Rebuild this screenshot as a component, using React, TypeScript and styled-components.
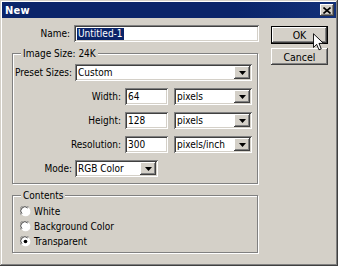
import React from 'react';
import styled, { createGlobalStyle } from 'styled-components';

const GlobalStyle = createGlobalStyle`
  html, body {
    margin: 0;
    padding: 0;
    background: #d4d0c8;
  }
  body {
    font-family: "DejaVu Sans Condensed", "DejaVu Sans", sans-serif;
    font-stretch: condensed;
    font-size: 10px;
    color: #000;
  }
`;

const raised = `
  box-shadow: inset -1px -1px #404040, inset 1px 1px #ffffff,
    inset -2px -2px #808080, inset 2px 2px #d4d0c8;
`;

const sunken = `
  box-shadow: inset 1px 1px #808080, inset -1px -1px #ffffff,
    inset 2px 2px #404040, inset -2px -2px #d4d0c8;
`;

const Window = styled.div`
  position: relative;
  width: 338px;
  height: 266px;
  box-sizing: border-box;
  padding: 2px;
  background: #d4d0c8;
  box-shadow: inset -1px -1px #404040, inset 1px 1px #d4d0c8,
    inset -2px -2px #808080, inset 2px 2px #ffffff;
  display: flex;
  flex-direction: column;
`;

const TitleBar = styled.div`
  height: 16px;
  background: linear-gradient(to right, #0a246a 0%, #0a246a 70%, #123078 100%);
  display: flex;
  align-items: center;
  justify-content: space-between;
  padding: 0 2px 0 3px;
`;

const Title = styled.span`
  color: #fff;
  font-weight: bold;
  font-size: 11px;
  letter-spacing: 0.2px;
`;

const CloseButton = styled.div`
  width: 14px;
  height: 12px;
  background: #d4d0c8;
  ${raised}
  display: flex;
  align-items: center;
  justify-content: center;
`;

const Body = styled.div`
  display: flex;
  padding: 7px 0 0 10px;
  gap: 12px;
`;

const LeftColumn = styled.div`
  width: 247px;
  display: flex;
  flex-direction: column;
`;

const RightColumn = styled.div`
  width: 57px;
  display: flex;
  flex-direction: column;
  padding-top: 1px;
  gap: 4px;
`;

const Row = styled.div<{ $gap?: number }>`
  height: 17px;
  display: flex;
  align-items: center;
  gap: ${(p) => p.$gap ?? 0}px;
`;

const Label = styled.label<{ $width: number; $space?: number }>`
  width: ${(p) => p.$width}px;
  margin-right: ${(p) => p.$space ?? 4}px;
  text-align: right;
  white-space: nowrap;
`;

const TextBox = styled.div<{ $width: number }>`
  width: ${(p) => p.$width}px;
  height: 17px;
  box-sizing: border-box;
  background: #fff;
  ${sunken}
  display: flex;
  align-items: center;
  padding: 0 3px;
  white-space: nowrap;
`;

const Selected = styled.span`
  background: #0a246a;
  color: #fff;
  padding: 0 1px;
  line-height: 12px;
`;

const SelectBox = styled(TextBox)`
  padding: 2px 2px 2px 3px;
  justify-content: space-between;
`;

const ArrowButton = styled.div`
  width: 16px;
  height: 13px;
  background: #d4d0c8;
  ${raised}
  display: flex;
  align-items: center;
  justify-content: center;
`;

const Group = styled.div<{ $height: number; $top: number }>`
  position: relative;
  margin-top: ${(p) => p.$top}px;
  width: 246px;
  height: ${(p) => p.$height}px;
  box-sizing: border-box;
  border: 1px solid #808080;
  box-shadow: 1px 1px 0 #ffffff, inset 1px 1px 0 #ffffff;
  display: flex;
  flex-direction: column;
`;

const Caption = styled.span`
  position: absolute;
  top: -7px;
  left: 8px;
  padding: 0 2px;
  line-height: 13px;
  background: #d4d0c8;
`;

const Fields = styled.div`
  padding-top: 10px;
  display: flex;
  flex-direction: column;
  gap: 7px;
`;

const Options = styled.div`
  padding: 8px 0 0 7px;
  display: flex;
  flex-direction: column;
`;

const RadioRow = styled.div`
  height: 15px;
  display: flex;
  align-items: center;
  gap: 3px;
`;

const Button = styled.div<{ $default?: boolean }>`
  height: ${(p) => (p.$default ? 18 : 17)}px;
  box-sizing: border-box;
  background: #d4d0c8;
  ${raised}
  border: ${(p) => (p.$default ? '1px solid #000' : 'none')};
  display: flex;
  align-items: center;
  justify-content: center;
  font-size: 10.5px;
`;

const Pointer = styled.svg`
  position: absolute;
  left: 313px;
  top: 33px;
`;

const Arrow = () => (
  <svg width="7" height="4" viewBox="0 0 7 4">
    <path d="M0 0h7L3.5 4z" fill="#000" />
  </svg>
);

const Select = ({ width, value }: { width: number; value: string }) => (
  <SelectBox $width={width}>
    <span>{value}</span>
    <ArrowButton>
      <Arrow />
    </ArrowButton>
  </SelectBox>
);

const Radio = ({ checked, label }: { checked?: boolean; label: string }) => (
  <RadioRow>
    <svg width="11" height="11" viewBox="0 0 12 12">
      <circle cx="6" cy="6" r="5.5" fill="#ffffff" />
      <path d="M1.2 9.5A5.5 5.5 0 0 1 9.5 1.2" stroke="#808080" strokeWidth="1" fill="none" />
      <path d="M2.2 8.5A4.3 4.3 0 0 1 8.5 2.2" stroke="#404040" strokeWidth="1" fill="none" />
      <path d="M2.5 10.5A5.5 5.5 0 0 0 10.5 2.5" stroke="#d4d0c8" strokeWidth="1" fill="none" />
      {checked && <circle cx="6" cy="6" r="2" fill="#000" />}
    </svg>
    <span>{label}</span>
  </RadioRow>
);

export default function App() {
  return (
    <>
      <GlobalStyle />
      <Window>
        <TitleBar>
          <Title>New</Title>
          <CloseButton>
            <svg width="8" height="7" viewBox="0 0 8 7">
              <path d="M0.5 0.5l7 6M7.5 0.5l-7 6" stroke="#000" strokeWidth="1.6" />
            </svg>
          </CloseButton>
        </TitleBar>
        <Body>
          <LeftColumn>
            <Row>
              <Label $width={58}>Name:</Label>
              <TextBox $width={185}>
                <Selected>Untitled-1</Selected>
              </TextBox>
            </Row>

            <Group $top={11} $height={131}>
              <Caption>Image Size: 24K</Caption>
              <Fields>
                <Row>
                  <Label $width={59} $space={3}>Preset Sizes:</Label>
                  <Select width={177} value="Custom" />
                </Row>
                <Row $gap={6}>
                  <Label $width={108} $space={-2}>Width:</Label>
                  <TextBox $width={43}>64</TextBox>
                  <Select width={78} value="pixels" />
                </Row>
                <Row $gap={6}>
                  <Label $width={108} $space={-2}>Height:</Label>
                  <TextBox $width={43}>128</TextBox>
                  <Select width={78} value="pixels" />
                </Row>
                <Row $gap={6}>
                  <Label $width={108} $space={-2}>Resolution:</Label>
                  <TextBox $width={43}>300</TextBox>
                  <Select width={78} value="pixels/inch" />
                </Row>
                <Row>
                  <Label $width={59} $space={3}>Mode:</Label>
                  <Select width={83} value="RGB Color" />
                </Row>
              </Fields>
            </Group>

            <Group $top={11} $height={58}>
              <Caption>Contents</Caption>
              <Options>
                <Radio label="White" />
                <Radio label="Background Color" />
                <Radio checked label="Transparent" />
              </Options>
            </Group>
          </LeftColumn>

          <RightColumn>
            <Button $default>OK</Button>
            <Button>Cancel</Button>
          </RightColumn>
        </Body>

        <Pointer width="11" height="18" viewBox="0 0 12 19">
          <path
            d="M0.5 0.5v15l3.5-3.5 2.5 6 2.5-1-2.5-6h5z"
            fill="#fff"
            stroke="#000"
            strokeWidth="1"
            strokeLinejoin="miter"
          />
        </Pointer>
      </Window>
    </>
  );
}
